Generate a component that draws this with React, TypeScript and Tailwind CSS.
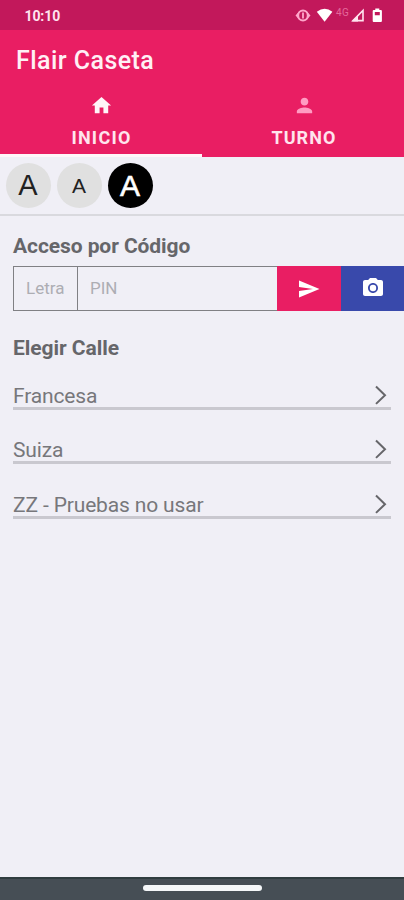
import React from 'react';

function StatusBar() {
  return (
    <div className="flex h-[30px] items-center bg-[#c2185b] pl-[24.500px] pr-[20px] text-white">
      <span className="mt-[2px] text-[14px] leading-[20px] font-bold tracking-[-0.1px] text-[#ffe4ef]">10:10</span>
      <svg className="ml-auto h-[30px] w-[90px]" viewBox="294 0 90 30" fill="none">
        <path d="M295.500 15.500l3.600-3.900v7.800zM310.500 15.500l-3.600-3.900v7.800z" fill="#ffa6cb" />
        <circle cx="303" cy="15.500" r="4.900" stroke="#ffa6cb" strokeWidth="2" />
        <path d="M303 12.500v6" stroke="#ffa6cb" strokeWidth="1.800" />
        <path d="M316.800 11.800q7.900-6 15.600 0L324.600 21.800z" fill="#fff" />
        <text x="336" y="16.300" fontSize="10" fill="#e4699b" fontFamily="Roboto" letterSpacing="0.500">4G</text>
        <path d="M353 20.600L363 10.400v10.200z" stroke="#ffe4ef" strokeWidth="1.600" />
        <path d="M352 21.400l6-6v6z" fill="#ffe4ef" />
        <path fillRule="evenodd" d="M375.300 8.500h4v1.500h1.600q1 0 1 1v10q0 1-1 1h-7.200q-1 0-1-1v-10q0-1 1-1h1.600zM374.800 12v3.200h5V12z" fill="#fff" />
      </svg>
    </div>
  );
}

function Header() {
  return (
    <header className="h-[127px] bg-[#e91e63] text-white">
      <div className="flex h-[60px] items-center pt-px pl-[16px]">
        <h1 className="text-[25px] leading-[30px] font-medium tracking-[0.450px] whitespace-nowrap text-[#fff0f5]">Flair Caseta</h1>
      </div>
      <nav className="grid h-[67px] grid-cols-2">
        <div className="flex flex-col items-center border-b-[3px] border-[#fff5f8] pt-[4px] pl-px">
          <svg className="h-[23px] w-[23px]" viewBox="0 0 24 24" fill="#fff5f8">
            <path d="M10 20v-6h4v6h5v-8h3L12 3 2 12h3v8z" />
          </svg>
          <span className="mt-[10px] text-[18px] leading-[22px] font-bold tracking-[1.250px] text-[#ffe4ed]">INICIO</span>
        </div>
        <div className="flex flex-col items-center pt-[4px] pl-[2px]">
          <svg className="h-[23px] w-[23px]" viewBox="0 0 24 24" fill="#ff9cc2">
            <path d="M12 12c2.210 0 4-1.790 4-4s-1.790-4-4-4-4 1.790-4 4 1.790 4 4 4zm0 2c-2.670 0-8 1.340-8 4v2h16v-2c0-2.660-5.330-4-8-4z" />
          </svg>
          <span className="mt-[10px] text-[18px] leading-[22px] font-bold tracking-[1.100px] text-[#ffe4ed]">TURNO</span>
        </div>
      </nav>
    </header>
  );
}

function TextSizeBar() {
  return (
    <div className="flex h-[59px] gap-[6px] border-b-2 border-[#d9d9de] pt-[6px] pl-[6px] font-['Liberation_Sans',sans-serif]">
      <button className="flex size-[45px] items-center justify-center rounded-full bg-[#e0e0e0] pr-px text-[29px] leading-none text-[#222]">A</button>
      <button className="flex size-[45px] items-center justify-center rounded-full bg-[#e0e0e0] pr-px text-[21px] leading-none text-[#222]">A</button>
      <button className="flex size-[45px] items-center justify-center rounded-full bg-black pt-px pr-px text-[30px] leading-none text-white [-webkit-text-stroke:0.6px_white]">A</button>
    </div>
  );
}

function CodeAccess() {
  return (
    <section className="pt-[17px]">
      <h2 className="pl-[13px] text-[21px] leading-[26px] font-bold tracking-[-0.080px] whitespace-nowrap text-[#66666a]">Acceso por Código</h2>
      <div className="mt-[7px] flex h-[45px] pl-[13px]">
        <div className="flex w-[65px] items-center border border-[#808084] pl-[12px] text-[17px] text-[#adadb3]">Letra</div>
        <div className="flex w-[199px] items-center border-y border-[#808084] pl-[12px] text-[17px] text-[#adadb3]">PIN</div>
        <button className="flex w-[64px] items-center justify-center bg-[#e91e63]">
          <svg className="h-[24px] w-[24px]" viewBox="0 0 24 24" fill="#fff">
            <path d="M2.010 20.500L22.500 12 2.010 3.500 2 10l14 2-14 2z" />
          </svg>
        </button>
        <button className="flex w-[63px] items-center justify-center bg-[#3949ab]">
          <svg className="mb-px h-[24px] w-[24px]" viewBox="0 0 24 24" fill="#fff">
            <circle cx="12" cy="12" r="3.200" />
            <path d="M9 2L7.170 4H4c-1.100 0-2 .9-2 2v12c0 1.100.9 2 2 2h16c1.100 0 2-.9 2-2V6c0-1.100-.9-2-2-2h-3.170L15 2H9zm3 15c-2.760 0-5-2.240-5-5s2.240-5 5-5 5 2.240 5 5-2.240 5-5 5z" />
          </svg>
        </button>
      </div>
    </section>
  );
}

const streets = ['Francesa', 'Suiza', 'ZZ - Pruebas no usar'];

function StreetList() {
  return (
    <section className="px-[13px] pt-[24px]">
      <h2 className="text-[21px] leading-[26px] font-bold tracking-[-0.050px] text-[#66666a]">Elegir Calle</h2>
      <ul className="-mt-[6px]">
        {streets.map((name) => (
          <li key={name} className="flex h-[54.500px] items-end justify-between border-b-[3px] border-[#c9c8cf]">
            <span className="-mb-px text-[21px] leading-[24px] tracking-[-0.150px] whitespace-nowrap text-[#77777b]">{name}</span>
            <svg className="mr-[3px] mb-[1px] h-[22px] w-[14px]" viewBox="0 0 14 22" fill="none" stroke="#66666a" strokeWidth="2">
              <path d="M2 2.500l9 8.700-9 8.700" />
            </svg>
          </li>
        ))}
      </ul>
    </section>
  );
}

export default function App() {
  return (
    <div className="flex h-[900px] w-[404px] flex-col overflow-hidden bg-[#f0eff6] font-[Roboto,sans-serif]">
      <StatusBar />
      <Header />
      <TextSizeBar />
      <main className="flex-1">
        <CodeAccess />
        <StreetList />
      </main>
      <footer className="flex h-[23px] justify-center border-t-2 border-[#303d40] bg-[#464e55] pt-[6px]">
        <div className="h-[6px] w-[119px] rounded-full bg-[#f5f7f9]" />
      </footer>
    </div>
  );
}
